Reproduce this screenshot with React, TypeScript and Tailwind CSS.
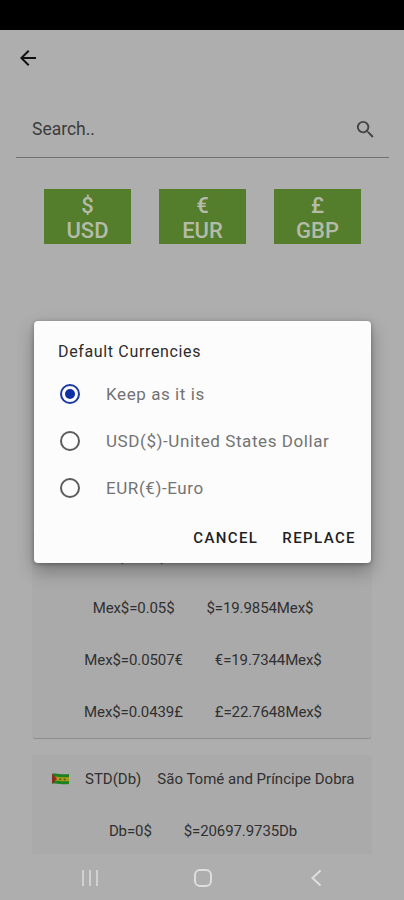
import { useState } from "react";

// libs
import clsx from "clsx";

type Flag = "mx" | "st";

type Currency = {
    flag: Flag;
    code: string;
    name: string;
    rates: [string, string][];
};

// constants
const DEFAULTS = [
    { symbol: "$", code: "USD" },
    { symbol: "€", code: "EUR" },
    { symbol: "£", code: "GBP" },
];

const OPTIONS = ["Keep as it is", "USD($)-United States Dollar", "EUR(€)-Euro"];

const CURRENCIES: Currency[] = [
    {
        flag: "mx",
        code: "MXN(Mex$)",
        name: "Mexican Peso",
        rates: [
            ["Mex$=0.05$", "$=19.9854Mex$"],
            ["Mex$=0.0507€", "€=19.7344Mex$"],
            ["Mex$=0.0439£", "£=22.7648Mex$"],
        ],
    },
    {
        flag: "st",
        code: "STD(Db)",
        name: "São Tomé and Príncipe Dobra",
        rates: [["Db=0$", "$=20697.9735Db"]],
    },
];

const FlagIcon = ({ flag }: { flag: Flag }) => {
    if (flag === "mx") {
        return (
            <svg width="17" height="12" viewBox="0 0 17 12">
                <path d="M0 1h6v10H0z" fill="#1c6b3a" />
                <path d="M6 1h5v10H6z" fill="#b5b5b5" />
                <path d="M11 1h6v10h-6z" fill="#92202a" />
            </svg>
        );
    }
    return (
        <svg width="17" height="12" viewBox="0 0 17 12">
            <path d="M0 .8C5-.4 10 2.2 17 1v10c-7 1.2-12-1.4-17-.2z" fill="#1f801f" />
            <path d="M0 4C5 2.8 10 5.2 17 4v4C10 9.2 5 6.8 0 8z" fill="#a89a14" />
            <path d="M0 .8 5 6l-5 4.8z" fill="#8e2a22" />
            <circle cx="8.3" cy="6.2" r="1" fill="#4a5a1a" />
            <circle cx="12.6" cy="6.4" r="1" fill="#4a5a1a" />
        </svg>
    );
};

const CurrencyCard = ({ currency }: { currency: Currency }) => (
    <article className="rounded-[2px] bg-[#aaaaaa] text-[15px] text-[#303030] shadow-[0_1px_1px_#8c8c8c]">
        <div className="flex h-[50px] items-center gap-4 pb-[2px] pl-[19px] whitespace-nowrap">
            <FlagIcon flag={currency.flag} />
            <span>{currency.code}</span>
            <span>{currency.name}</span>
        </div>
        {currency.rates.map(([from, to]) => (
            <div key={from} className="flex h-[52px] items-center justify-center gap-8 pl-[2px] tracking-[-0.1px]">
                <span>{from}</span>
                <span>{to}</span>
            </div>
        ))}
    </article>
);

const DefaultDialog = () => {
    const [selected, setSelected] = useState(0);

    return (
        <div
            role="dialog"
            className="absolute top-[321px] left-[34px] flex h-[242px] w-[337px] flex-col rounded-[4px] bg-[#fcfcfc] shadow-[0_8px_18px_rgba(0,0,0,0.3),0_1px_4px_rgba(0,0,0,0.3)]"
        >
            <h2 className="mt-5 ml-6 h-[22px] text-[16px] leading-[22px] tracking-[0.65px] text-[#2c2c2c]">
                Default Currencies
            </h2>
            <div className="mt-[7px] flex flex-col">
                {OPTIONS.map((option, i) => (
                    <button
                        key={option}
                        onClick={() => setSelected(i)}
                        className="flex h-[47.3px] items-center pl-[26px] text-[17px] tracking-[0.58px] text-[#737373]"
                    >
                        <span
                            className={clsx(
                                "flex size-5 items-center justify-center rounded-full border-2",
                                selected === i ? "border-[#1c3aa5]" : "border-[#5c5c5c]"
                            )}
                        >
                            {selected === i && <span className="size-[10px] rounded-full bg-[#0d2fa3]" />}
                        </span>
                        <span className="ml-[26px] pt-[2px]">{option}</span>
                    </button>
                ))}
            </div>
            <div className="mt-4 flex h-5 items-center justify-end gap-6 pr-[15px] text-[15px] font-medium tracking-[1.4px] text-[#1f1f1f]">
                <button>CANCEL</button>
                <button>REPLACE</button>
            </div>
        </div>
    );
};

const App = () => {
    return (
        <div className="relative flex h-[900px] w-[404px] flex-col overflow-hidden bg-[#aeaeae] font-[Roboto,sans-serif]">
            <div className="h-[30px] shrink-0 bg-black" />
            <header className="flex h-[56px] shrink-0 items-center pl-[16px]">
                <svg width="24" height="24" viewBox="0 0 24 24" fill="#111111">
                    <path d="M20 11H7.83l5.59-5.59L12 4l-8 8 8 8 1.41-1.41L7.83 13H20v-2z" />
                </svg>
            </header>
            <div className="mt-[15px] mr-[15px] ml-4 flex h-[57px] shrink-0 items-center justify-between border-b border-[#707070] pr-3 pl-4">
                <span className="pt-px text-[17.5px] text-[#3c3c3c]">Search..</span>
                <svg width="23" height="23" viewBox="0 0 24 24" fill="#454545">
                    <path d="M15.5 14h-.79l-.28-.27A6.47 6.47 0 0 0 16 9.5 6.5 6.5 0 1 0 9.5 16c1.61 0 3.09-.59 4.23-1.57l.27.28v.79l5 4.99L20.49 19l-4.99-5zm-6 0C7.01 14 5 11.99 5 9.5S7.01 5 9.5 5 14 7.01 14 9.5 11.99 14 9.5 14z" />
                </svg>
            </div>
            <div className="mt-[31px] flex shrink-0 justify-between pr-[43px] pl-[44px]">
                {DEFAULTS.map(({ symbol, code }) => (
                    <div
                        key={code}
                        className="flex h-[55px] w-[87px] flex-col items-center bg-[#547d2c] pt-1 text-[22px] leading-[25px] font-medium text-[#b4bba9]"
                    >
                        <span>{symbol}</span>
                        <span>{code}</span>
                    </div>
                ))}
            </div>
            <main className="mt-[288px] flex min-h-0 flex-1 flex-col gap-[17px] overflow-hidden px-[33px]">
                {CURRENCIES.map((currency) => (
                    <CurrencyCard key={currency.code} currency={currency} />
                ))}
            </main>
            <nav className="flex h-[46px] shrink-0 items-center justify-between bg-[#aeaeae] pt-[2px] pr-[77px] pl-[79px]">
                <svg width="22" height="22" viewBox="0 0 22 22" stroke="#dadada" strokeWidth="1.6">
                    <path d="M4 3v16M11 3v16M18 3v16" />
                </svg>
                <svg width="22" height="22" viewBox="0 0 22 22" fill="none" stroke="#dedede" strokeWidth="2">
                    <rect x="3" y="3" width="16" height="16" rx="5" />
                </svg>
                <svg width="22" height="22" viewBox="0 0 22 22" fill="none" stroke="#dedede" strokeWidth="2">
                    <path d="m15.500 3.500-8 7.500 8 7.500" />
                </svg>
            </nav>
            <DefaultDialog />
        </div>
    );
};

export default App;
